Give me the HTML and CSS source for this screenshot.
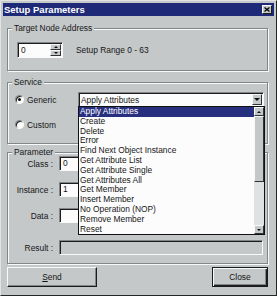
FILE: index.html
```html
<!DOCTYPE html>
<html lang="en">
<head>
  <meta charset="UTF-8">
  <title>Setup Parameters</title>
  <link rel="stylesheet" href="styles.css">
</head>
<body>
  <div class="window">
    <div class="titlebar">
      <span class="title">Setup Parameters</span>
      <span class="close-box">
        <svg width="6" height="5" viewBox="0 0 6 5"><path d="M0.5 0.5 L5.5 4.5 M5.5 0.5 L0.5 4.5" stroke="#000" stroke-width="1.3"/></svg>
      </span>
    </div>

    <div class="group target">
      <div class="group-title">Target Node Address</div>
      <div class="group-body target-row">
        <div class="spin">
          <span class="spin-value">0</span>
          <div class="spin-buttons">
            <span class="mini-btn"><i class="tri-up"></i></span>
            <span class="mini-btn"><i class="tri-down small"></i></span>
          </div>
        </div>
        <span class="range">Setup Range 0 - 63</span>
      </div>
    </div>

    <div class="group service">
      <div class="group-title">Service</div>
      <div class="group-body service-grid">
        <label class="radio-row"><span class="radio checked"></span>Generic</label>
        <div class="combo">
          <span>Apply Attributes</span>
          <span class="mini-btn combo-btn"><i class="tri-down"></i></span>
        </div>
        <label class="radio-row"><span class="radio"></span>Custom</label>
      </div>
    </div>

    <div class="group parameter">
      <div class="group-title">Parameter</div>
      <div class="group-body">
        <div class="param-row"><span class="param-label">Class :</span><span class="field">0</span></div>
        <div class="param-row"><span class="param-label">Instance :</span><span class="field">1</span></div>
        <div class="param-row"><span class="param-label">Data :</span><span class="field"></span></div>
        <div class="param-row result"><span class="param-label">Result :</span><span class="field wide"></span></div>
      </div>
    </div>

    <div class="buttons">
      <button class="btn send"><u>S</u>end</button>
      <button class="btn close default">Close</button>
    </div>

    <div class="dropdown">
      <ul class="options">
        <li class="selected">Apply Attributes</li>
        <li>Create</li>
        <li>Delete</li>
        <li>Error</li>
        <li>Find Next Object Instance</li>
        <li>Get Attribute List</li>
        <li>Get Attribute Single</li>
        <li>Get Attributes All</li>
        <li>Get Member</li>
        <li>Insert Member</li>
        <li>No Operation (NOP)</li>
        <li>Remove Member</li>
        <li>Reset</li>
      </ul>
      <div class="scrollbar">
        <span class="mini-btn arrow"><i class="tri-up"></i></span>
        <span class="thumb"></span>
        <span class="track"></span>
        <span class="mini-btn arrow"><i class="tri-down small"></i></span>
      </div>
    </div>
  </div>
</body>
</html>
```

FILE: styles.css
```css
:root {
  --bg: #c4c8c9;
  --light: #f8f9f9;
  --shadow: #82868a;
  --dark: #1c1c1c;
  --navy: #1e2a78;
  --field: #fcfcfc;
}

* {
  box-sizing: border-box;
}

body {
  margin: 0;
  background: var(--bg);
  font-family: "Liberation Sans", Arial, sans-serif;
  font-size: 8.4px;
  color: #161616;
}

.window {
  position: relative;
  width: 277px;
  height: 296px;
  padding: 2px;
  background: var(--bg);
  border: 1px solid;
  border-color: #e2e4e4 #262626 #262626 #e2e4e4;
}

.titlebar {
  height: 13px;
  padding: 0 2px 0 1px;
  display: flex;
  align-items: center;
  justify-content: space-between;
  background: var(--navy);
}

.title {
  color: #fff;
  font-weight: bold;
  font-size: 9.5px;
}

.close-box {
  width: 10px;
  height: 9px;
  display: flex;
  align-items: center;
  justify-content: center;
  background: var(--bg);
  border: 1px solid;
  border-color: var(--light) var(--dark) var(--dark) var(--light);
}

/* group boxes */
.group {
  margin: 0 6px 0 4px;
  border: 1px solid var(--shadow);
  box-shadow: inset 1px 1px 0 var(--light), 1px 1px 0 var(--light);
}

.group-title {
  width: max-content;
  margin: -6px 0 -4px 4px;
  padding: 0 2px;
  line-height: 10px;
  background: var(--bg);
}

.target {
  margin-top: 12px;
}

.target-row {
  padding: 13px 0 12px 9px;
  display: flex;
  align-items: center;
}

.spin {
  width: 46px;
  height: 16px;
  padding: 1px 1px 1px 3px;
  display: flex;
  justify-content: space-between;
  background: var(--field);
  border: 1px solid;
  border-color: var(--shadow) var(--light) var(--light) var(--shadow);
  box-shadow: inset 1px 1px 0 var(--dark);
}

.spin-value {
  line-height: 13px;
}

.spin-buttons {
  width: 11px;
  display: flex;
  flex-direction: column;
}

.mini-btn {
  flex: 1;
  display: flex;
  align-items: center;
  justify-content: center;
  background: var(--bg);
  border: 1px solid;
  border-color: var(--light) #333 #333 var(--light);
}

.tri-up {
  width: 0;
  height: 0;
  border-left: 2px solid transparent;
  border-right: 2px solid transparent;
  border-bottom: 2px solid #111;
}

.tri-down {
  width: 0;
  height: 0;
  border-left: 3px solid transparent;
  border-right: 3px solid transparent;
  border-top: 3px solid #111;
}

.tri-down.small {
  border-width: 2px 2px 0;
}

.range {
  margin-left: 13px;
}

.service {
  margin-top: 11px;
}

.service-grid {
  padding: 9px 3px 11px 7px;
  display: grid;
  grid-template-columns: 63px 1fr;
  grid-template-rows: 15px 15px;
  row-gap: 10px;
  align-items: center;
}

.radio-row {
  display: flex;
  align-items: center;
  gap: 3px;
}

.radio {
  width: 9px;
  height: 9px;
  display: flex;
  align-items: center;
  justify-content: center;
  border-radius: 50%;
  background: var(--field);
  border: 1px solid;
  border-color: var(--shadow) var(--light) var(--light) var(--shadow);
  box-shadow: inset 1px 1px 0 var(--dark);
}

.radio.checked::after {
  content: "";
  width: 3px;
  height: 3px;
  border-radius: 50%;
  background: #111;
}

.combo {
  height: 15px;
  padding: 1px 1px 1px 2px;
  display: flex;
  align-items: center;
  justify-content: space-between;
  background: var(--field);
  border: 1px solid;
  border-color: var(--shadow) var(--light) var(--light) var(--shadow);
  box-shadow: inset 1px 1px 0 var(--dark);
}

.combo-btn {
  flex: none;
  width: 10px;
  height: 100%;
}

.parameter {
  margin-top: 8px;
}

.parameter .group-body {
  padding: 3px 4px 8px 0;
}

.param-row {
  height: 15px;
  margin-top: 11px;
  display: flex;
  align-items: center;
  gap: 6px;
}

.param-row:first-child {
  margin-top: 0;
}

.param-row.result {
  margin-top: 17px;
}

.param-label {
  width: 45px;
  text-align: right;
}

.field {
  width: 90px;
  height: 15px;
  padding-left: 3px;
  line-height: 13px;
  background: var(--field);
  border: 1px solid;
  border-color: var(--shadow) var(--light) var(--light) var(--shadow);
  box-shadow: inset 1px 1px 0 var(--dark);
}

.field.wide {
  width: 204px;
  background: var(--bg);
}

/* dialog buttons */
.buttons {
  margin: 3px 6px 0 4px;
  display: flex;
  justify-content: space-between;
}

.btn {
  height: 20px;
  padding: 0;
  font: inherit;
  color: inherit;
  background: var(--bg);
  border: 1px solid;
  border-color: var(--light) var(--dark) var(--dark) var(--light);
  box-shadow: inset -1px -1px 0 var(--shadow);
}

.send {
  width: 90px;
}

.close {
  width: 56px;
}

.btn.default {
  border-color: var(--dark);
  box-shadow: inset 1px 1px 0 var(--light), inset -1px -1px 0 var(--dark), inset -2px -2px 0 var(--shadow);
}

/* open combo list */
.dropdown {
  position: absolute;
  left: 77px;
  top: 105px;
  width: 187px;
  height: 129px;
  display: flex;
  background: var(--field);
  border: 1px solid #111;
}

.options {
  flex: 1;
  margin: 0;
  padding: 0;
  list-style: none;
}

.options li {
  padding-left: 1px;
  line-height: 9.8px;
  white-space: nowrap;
}

.options li.selected {
  background: #27307f;
  color: #fff;
}

.scrollbar {
  width: 10px;
  display: flex;
  flex-direction: column;
}

.scrollbar .arrow {
  flex: none;
  height: 9px;
}

.thumb {
  height: 66px;
  background: var(--bg);
  border: 1px solid;
  border-color: var(--light) #333 #333 var(--light);
}

.track {
  flex: 1;
  background: #dfe1e2;
}
```
